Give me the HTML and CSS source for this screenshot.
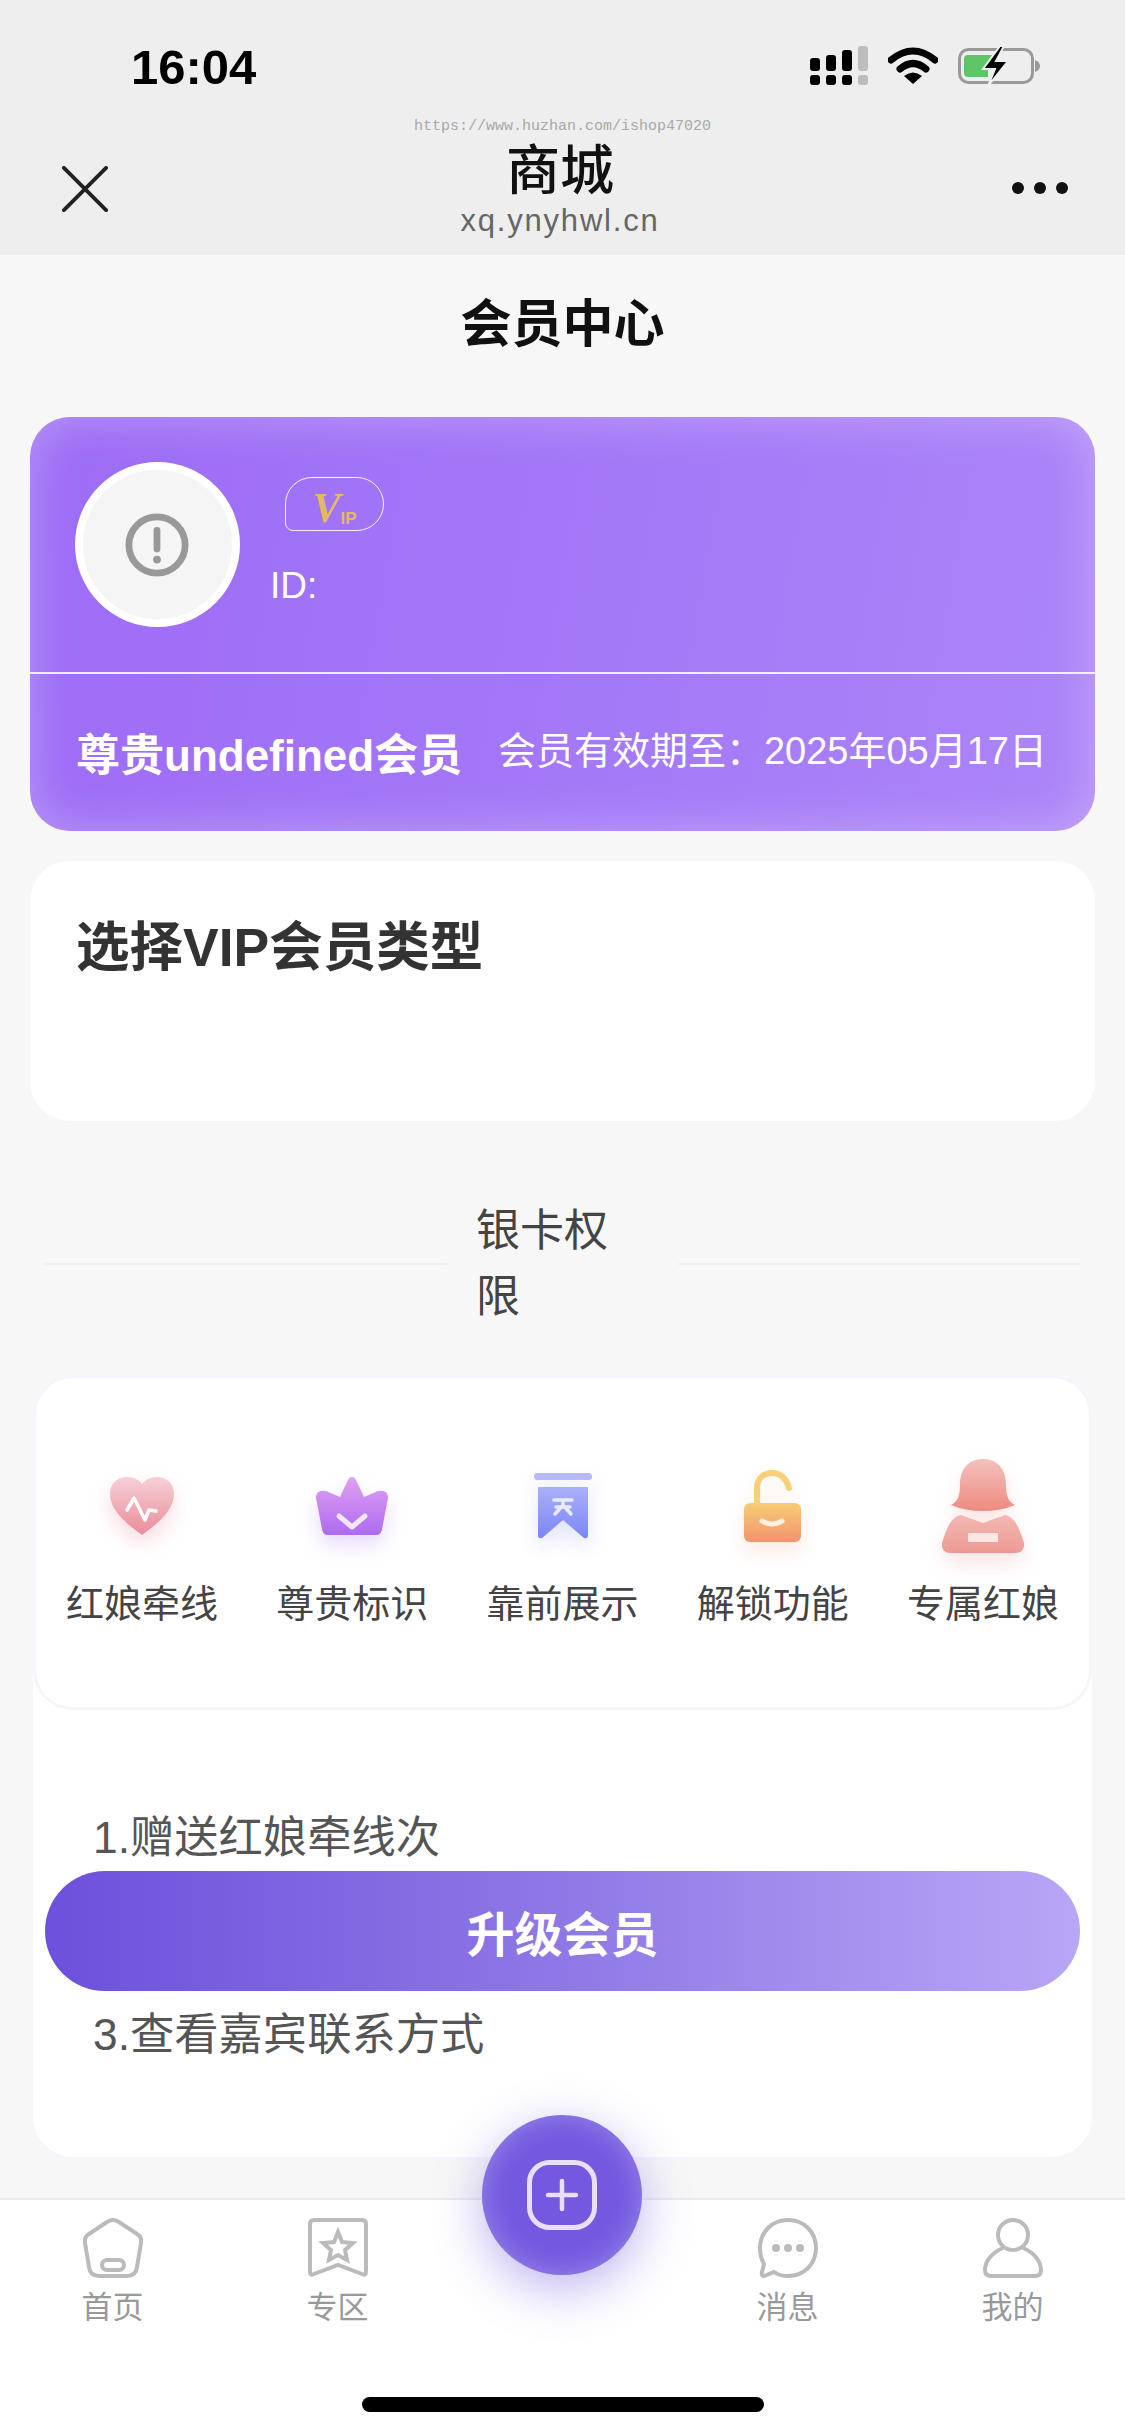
FILE: index.html
```html
<!DOCTYPE html>
<html lang="zh-CN">
<head>
  <meta charset="UTF-8">
  <meta name="viewport" content="width=device-width, initial-scale=1.0">
  <title>会员中心</title>
  <link rel="stylesheet" href="styles.css">
</head>
<body>
  <header class="nav">
    <div class="status">
      <span class="time">16:04</span>
      <div class="status-icons">
        <svg class="ic-signal" viewBox="0 0 58 40">
          <g fill="#000">
            <rect x="0" y="12" width="10" height="13" rx="3"/><rect x="16" y="9" width="10" height="16" rx="3"/><rect x="32" y="4" width="10" height="21" rx="3"/>
            <rect x="0" y="29" width="10" height="10" rx="3"/><rect x="16" y="29" width="10" height="10" rx="3"/><rect x="32" y="29" width="10" height="10" rx="3"/>
          </g>
          <g fill="#bdbdbd"><rect x="48" y="0" width="10" height="25" rx="3"/><rect x="48" y="29" width="10" height="10" rx="3"/></g>
        </svg>
        <svg class="ic-wifi" viewBox="0 0 50 38">
          <path d="M3 14 Q25 -4 47 14" fill="none" stroke="#000" stroke-width="7" stroke-linecap="round"/>
          <path d="M12 23 Q25 12 38 23" fill="none" stroke="#000" stroke-width="7" stroke-linecap="round"/>
          <path d="M16 30 Q25 23 34 30 L25 38 Z" fill="#000"/>
        </svg>
        <svg class="ic-battery" viewBox="0 0 82 40">
          <rect x="1.5" y="3.5" width="73" height="33" rx="9" fill="none" stroke="#999" stroke-width="3"/>
          <path d="M77 14 Q82 16 82 20 Q82 24 77 26 Z" fill="#999"/>
          <path d="M10 9 H36 L24 24 H30 V31 H10 Q6 31 6 27 V13 Q6 9 10 9 Z" fill="#5fc466"/>
          <path d="M42 0 L25 23 H37 L30 40 L50 15 H38 L46 0 Z" fill="#000" stroke="#eee" stroke-width="2"/>
        </svg>
      </div>
    </div>
    <span class="watermark">https://www.huzhan.com/ishop47020</span>
    <div class="titlebar">
      <svg class="ic-close" viewBox="0 0 48 48"><path d="M2 2 L46 46 M46 2 L2 46" stroke="#222" stroke-width="4" stroke-linecap="round"/></svg>
      <div class="site">
        <div class="site-name">商城</div>
        <div class="site-url">xq.ynyhwl.cn</div>
      </div>
      <div class="more"><i></i><i></i><i></i></div>
    </div>
  </header>

  <h1 class="page-title">会员中心</h1>

  <section class="vip-card">
    <div class="vip-top">
      <div class="avatar">
        <svg viewBox="0 0 66 66"><circle cx="33" cy="33" r="29" fill="none" stroke="#999" stroke-width="7"/><path d="M33 18 V37" stroke="#999" stroke-width="7" stroke-linecap="round"/><circle cx="33" cy="48" r="4" fill="#999"/></svg>
      </div>
      <div class="vip-info">
        <div class="vip-tag"><span class="vip-v">V</span><span class="vip-ip">IP</span></div>
        <div class="vip-id">ID:</div>
      </div>
    </div>
    <div class="vip-bottom">
      <span class="vip-level">尊贵undefined会员</span>
      <span class="vip-date">会员有效期至：2025年05月17日</span>
    </div>
  </section>

  <section class="type-card">
    <h2>选择VIP会员类型</h2>
  </section>

  <div class="rights-head">
    <span class="rights-line"></span>
    <span class="rights-name">银卡权限</span>
    <span class="rights-line"></span>
  </div>

  <section class="panel">
    <div class="perks">
      <div class="perk">
        <div class="perk-icon">
          <svg class="i-heart" width="66" height="60" viewBox="0 0 66 60">
            <defs><linearGradient id="g1" x1="0" y1="0" x2="0" y2="1"><stop offset="0" stop-color="#f6d0d5"/><stop offset="1" stop-color="#ea8b9a"/></linearGradient></defs>
            <path d="M33 59 C24 52 1 37 1 18 C1 7 9 1 18 1 C25 1 30 4 33 8 C36 4 41 1 48 1 C57 1 65 7 65 18 C65 37 42 52 33 59 Z" fill="url(#g1)"/>
            <path d="M18 34 L25 22 L36 44 L40 34 L47 35" fill="none" stroke="#fff" stroke-width="3.5" stroke-linejoin="round" stroke-linecap="round"/>
          </svg>
        </div>
        <span>红娘牵线</span>
      </div>
      <div class="perk">
        <div class="perk-icon">
          <svg class="i-crown" width="72" height="60" viewBox="0 0 72 60">
            <defs><linearGradient id="g2" x1="0" y1="0" x2="0" y2="1"><stop offset="0" stop-color="#e0a2f2"/><stop offset="1" stop-color="#ac6af0"/></linearGradient></defs>
            <path d="M36 1 Q39 1 41 6 L48 21 L62 15 Q72 13 72 22 L66 53 Q65 59 60 59 H12 Q7 59 6 53 L0 22 Q0 13 10 15 L24 21 L31 6 Q33 1 36 1 Z" fill="url(#g2)"/>
            <path d="M23 40 L36 51 L49 40" fill="none" stroke="#f4e6fb" stroke-width="5" stroke-linecap="round" stroke-linejoin="round"/>
          </svg>
        </div>
        <span>尊贵标识</span>
      </div>
      <div class="perk">
        <div class="perk-icon">
          <svg class="i-mark" width="58" height="68" viewBox="0 0 58 68">
            <defs><linearGradient id="g3" x1="0" y1="0" x2="0" y2="1"><stop offset="0" stop-color="#aab0f8"/><stop offset="1" stop-color="#7a86f8"/></linearGradient></defs>
            <rect x="0" y="1" width="58" height="7" rx="3.5" fill="#b6b8f8"/>
            <path d="M4 15 H54 V63 Q54 67 50 66 L29 48 L8 66 Q4 67 4 63 Z" fill="url(#g3)"/>
            <path d="M20 28 H38 M29 28 V33 L21 42 M29 33 L37 42 M22 35 H36" fill="none" stroke="#e8ebff" stroke-width="3.5" stroke-linecap="round"/>
          </svg>
        </div>
        <span>靠前展示</span>
      </div>
      <div class="perk">
        <div class="perk-icon">
          <svg class="i-lock" width="58" height="72" viewBox="0 0 58 72">
            <defs><linearGradient id="g4" x1="0" y1="0" x2="0" y2="1"><stop offset="0" stop-color="#f8cc74"/><stop offset="1" stop-color="#f29470"/></linearGradient></defs>
            <path d="M13 36 V18 C13 8 20 3 28 3 C36 3 42 8 45 18" fill="none" stroke="#f9cf78" stroke-width="6" stroke-linecap="round"/>
            <rect x="0" y="33" width="57" height="39" rx="6" fill="url(#g4)"/>
            <path d="M18 51 Q28 57 38 51" fill="none" stroke="#fdf0dc" stroke-width="5" stroke-linecap="round"/>
          </svg>
        </div>
        <span>解锁功能</span>
      </div>
      <div class="perk">
        <div class="perk-icon">
          <svg class="i-girl" width="84" height="94" viewBox="0 0 84 94">
            <defs>
              <linearGradient id="g5" x1="0" y1="0" x2="0" y2="1"><stop offset="0" stop-color="#f2c2bc"/><stop offset="1" stop-color="#ef8a80"/></linearGradient>
              <linearGradient id="g6" x1="0" y1="0" x2="0" y2="1"><stop offset="0" stop-color="#f3b8b2"/><stop offset="1" stop-color="#ee9a94"/></linearGradient>
            </defs>
            <path d="M42 0 C58 0 65 12 65 26 C65 38 68 43 74 46 Q60 52 42 52 Q24 52 10 46 C16 43 19 38 19 26 C19 12 26 0 42 0 Z" fill="url(#g5)"/>
            <path d="M20 56 L42 64 L64 56 C74 58 78 68 83 84 Q84 94 74 94 H10 Q0 94 1 84 C6 68 10 58 20 56 Z" fill="url(#g6)"/>
            <rect x="27" y="74" width="30" height="9" fill="#fbe6e4"/>
          </svg>
        </div>
        <span>专属红娘</span>
      </div>
    </div>
    <ul class="rights-list">
      <li>1.赠送红娘牵线次</li>
      <li></li>
      <li>3.查看嘉宾联系方式</li>
    </ul>
  </section>

  <button class="upgrade">升级会员</button>

  <footer class="tabbar">
    <nav class="tabs">
      <a class="tab">
        <svg viewBox="0 0 60 60"><path d="M24 4 Q30 0 36 4 L54 16 Q59 19 58 25 L54 49 Q53 58 44 58 H16 Q7 58 6 49 L2 25 Q1 19 6 16 Z" fill="none" stroke="#bbb" stroke-width="4"/><rect x="19" y="42" width="22" height="10" rx="5" fill="none" stroke="#bbb" stroke-width="4"/></svg>
        <span>首页</span>
      </a>
      <a class="tab">
        <svg viewBox="0 0 60 60"><path d="M6 2 H54 Q58 2 58 6 V54 Q58 58 54 56 L30 47 L6 56 Q2 58 2 54 V6 Q2 2 6 2 Z" fill="none" stroke="#bbb" stroke-width="4"/><path d="M30 14 L34 24 L45 25 L37 32 L39 42 L30 37 L21 42 L23 32 L15 25 L26 24 Z" fill="none" stroke="#bbb" stroke-width="4"/></svg>
        <span>专区</span>
      </a>
      <a class="tab tab-empty"></a>
      <a class="tab">
        <svg viewBox="0 0 60 60"><path d="M30 2 C46 2 58 14 58 30 C58 46 46 58 30 58 C24 58 20 57 16 54 L6 58 Q3 58 4 54 L6 46 C3 41 2 36 2 30 C2 14 14 2 30 2 Z" fill="none" stroke="#bbb" stroke-width="4"/><circle cx="18" cy="30" r="4" fill="#bbb"/><circle cx="30" cy="30" r="4" fill="#bbb"/><circle cx="42" cy="30" r="4" fill="#bbb"/></svg>
        <span>消息</span>
      </a>
      <a class="tab">
        <svg viewBox="0 0 60 60"><circle cx="30" cy="17" r="15" fill="none" stroke="#bbb" stroke-width="4"/><path d="M20 30 C8 35 2 44 2 52 Q2 58 8 58 H52 Q58 58 58 52 C58 44 52 35 40 30" fill="none" stroke="#bbb" stroke-width="4"/></svg>
        <span>我的</span>
      </a>
    </nav>
    <div class="home-bar"></div>
    <button class="fab">
      <svg viewBox="0 0 70 70"><rect x="2.5" y="2.5" width="65" height="65" rx="20" fill="none" stroke="#e6e0fa" stroke-width="5"/><path d="M35 21 V49 M21 35 H49" stroke="#e6e0fa" stroke-width="4.5" stroke-linecap="round"/></svg>
    </button>
  </footer>
</body>
</html>
```

FILE: styles.css
```css
* {
  box-sizing: border-box;
}
html, body {
  margin: 0;
  padding: 0;
}
body {
  position: relative;
  width: 1125px;
  height: 2436px;
  overflow: hidden;
  background: #f7f7f7;
  color: #333;
  font-family: "Liberation Sans", "Noto Sans CJK SC", sans-serif;
}

/* top bar */
.nav {
  position: relative;
  height: 255px;
  background: #eeeeee;
}
.status {
  display: flex;
  justify-content: space-between;
  align-items: flex-start;
  height: 115px;
  padding: 46px 85px 0 131px;
}
.time {
  font-size: 49px;
  font-weight: bold;
  line-height: 42px;
  color: #000;
}
.status-icons {
  display: flex;
  align-items: flex-start;
  gap: 20px;
}
.ic-signal {
  width: 58px;
  height: 40px;
}
.ic-wifi {
  width: 50px;
  height: 38px;
}
.ic-battery {
  width: 82px;
  height: 40px;
}
.watermark {
  position: absolute;
  top: 118px;
  left: 0;
  right: 0;
  text-align: center;
  font-family: "Liberation Mono", monospace;
  font-size: 15px;
  line-height: 18px;
  color: #a8a8a8;
}
.titlebar {
  display: flex;
  justify-content: space-between;
  align-items: center;
  height: 140px;
  padding: 0 57px 0 62px;
}
.ic-close {
  width: 46px;
  height: 46px;
  margin-top: 7px;
}
.site {
  margin-top: 11px;
  text-align: center;
}
.site-name {
  font-size: 54px;
  font-weight: 500;
  line-height: 60px;
  color: #111;
}
.site-url {
  font-size: 31px;
  line-height: 40px;
  letter-spacing: 1.8px;
  color: #666;
}
.more {
  display: flex;
  gap: 10px;
  margin-top: 6px;
}
.more i {
  width: 12px;
  height: 12px;
  border-radius: 50%;
  background: #111;
}

.page-title {
  margin: 0;
  height: 134px;
  padding-top: 3px;
  font-size: 51px;
  font-weight: bold;
  line-height: 134px;
  text-align: center;
  color: #111;
}

/* vip card */
.vip-card {
  margin: 28px 30px 0;
  height: 414px;
  border-radius: 40px;
  color: #fff;
  background: linear-gradient(100deg, #9d6cf6 0%, #a57af8 60%, #ad85f8 100%);
  box-shadow: inset 0 0 48px rgba(255, 255, 255, 0.3);
}
.vip-top {
  display: flex;
  height: 257px;
  padding: 45px 0 0 45px;
  gap: 31px;
  border-bottom: 2px solid rgba(255, 255, 255, 0.85);
}
.avatar {
  display: flex;
  align-items: center;
  justify-content: center;
  width: 165px;
  height: 165px;
  border: 8px solid #fff;
  border-radius: 50%;
  background: #f5f5f5;
}
.avatar svg {
  width: 64px;
  height: 64px;
  margin-left: -2px;
}
.vip-tag {
  display: flex;
  justify-content: center;
  align-items: flex-end;
  width: 99px;
  height: 54px;
  margin: 15px 0 0 14px;
  padding-bottom: 3px;
  border: 1.5px solid rgba(255, 255, 255, 0.9);
  border-radius: 27px 27px 27px 8px;
  color: #e2ba62;
}
.vip-v {
  font-family: "Liberation Serif", serif;
  font-style: italic;
  font-weight: bold;
  font-size: 42px;
  line-height: 38px;
}
.vip-ip {
  font-size: 17px;
  font-weight: bold;
  line-height: 16px;
}
.vip-id {
  margin: 30px 0 0 -1px;
  font-size: 37px;
  line-height: 50px;
}
.vip-bottom {
  display: flex;
  justify-content: space-between;
  align-items: center;
  height: 155px;
  padding: 0 48px 0 46px;
}
.vip-level {
  font-size: 44px;
  font-weight: bold;
}
.vip-date {
  font-size: 38px;
  margin-top: -8px;
}

.type-card {
  height: 260px;
  margin: 30px 30px 0;
  padding: 54px 46px 0;
  border-radius: 40px;
  background: #fff;
}
.type-card h2 {
  margin: 0;
  font-size: 53.5px;
  font-weight: bold;
  line-height: 66px;
  color: #333;
}

.rights-head {
  display: flex;
  align-items: center;
  margin: 77px 45px 0;
}
.rights-line {
  flex: 1;
  height: 2px;
  background: #efefef;
}
.rights-name {
  width: 231px;
  padding: 0 29px;
  font-size: 44px;
  line-height: 66px;
  color: #444;
}

/* benefits */
.panel {
  height: 782px;
  margin: 45px 33px 0;
  border-radius: 40px;
  background: #fff;
  box-shadow: 0 3px 0 #f5f5fe;
}
.perks {
  display: flex;
  height: 335px;
  padding: 68px 1px 0;
  border: 3px solid #f5f5fe;
  border-radius: 40px;
  background: #fff;
}
.perk {
  display: flex;
  flex: 1;
  flex-direction: column;
  align-items: center;
  gap: 13px;
  font-size: 38px;
  line-height: 50px;
  color: #444;
}
.perk-icon {
  display: flex;
  align-items: center;
  justify-content: center;
  height: 120px;
}
.i-heart {
  filter: blur(0.7px) drop-shadow(0 10px 10px rgba(234, 139, 154, 0.3));
}
.i-crown {
  filter: blur(0.7px) drop-shadow(0 10px 10px rgba(172, 106, 240, 0.25));
}
.i-mark {
  filter: blur(0.7px) drop-shadow(0 10px 10px rgba(122, 134, 248, 0.22));
}
.i-lock {
  filter: blur(0.7px) drop-shadow(0 10px 10px rgba(242, 148, 112, 0.22));
}
.i-girl {
  filter: blur(0.7px) drop-shadow(0 10px 10px rgba(238, 154, 148, 0.25));
}
.rights-list {
  margin: 79px 0 0;
  padding: 0 0 0 60px;
  list-style: none;
  font-size: 44.3px;
  line-height: 98.5px;
  color: #555;
}
.rights-list li {
  height: 98.5px;
}

.upgrade {
  position: absolute;
  top: 1871px;
  left: 45px;
  width: 1035px;
  height: 120px;
  border: none;
  border-radius: 60px;
  background: linear-gradient(90deg, #6d50dc 0%, #8f78e6 50%, #b9a6f6 100%);
  color: #fff;
  font-family: inherit;
  font-size: 48px;
  font-weight: bold;
}

/* tabbar */
.tabbar {
  position: relative;
  height: 238px;
  margin-top: 41px;
  border-top: 2px solid #ececec;
  background: #fff;
}
.tabs {
  display: grid;
  grid-template-columns: repeat(5, 1fr);
  padding-top: 18px;
}
.tab {
  display: flex;
  flex-direction: column;
  align-items: center;
  gap: 10px;
  font-size: 31px;
  line-height: 40px;
  color: #999;
}
.tab svg {
  width: 60px;
  height: 60px;
}
.home-bar {
  width: 402px;
  height: 15px;
  margin: 69px auto 0;
  border-radius: 8px;
  background: #000;
}
.fab {
  position: absolute;
  top: -85px;
  left: 482px;
  display: flex;
  align-items: center;
  justify-content: center;
  width: 160px;
  height: 160px;
  padding: 0;
  border: none;
  border-radius: 50%;
  background: #7459e0;
  box-shadow: inset 0 0 28px rgba(255, 255, 255, 0.28), 0 14px 50px rgba(116, 89, 224, 0.45);
}
.fab svg {
  width: 70px;
  height: 70px;
}
```
